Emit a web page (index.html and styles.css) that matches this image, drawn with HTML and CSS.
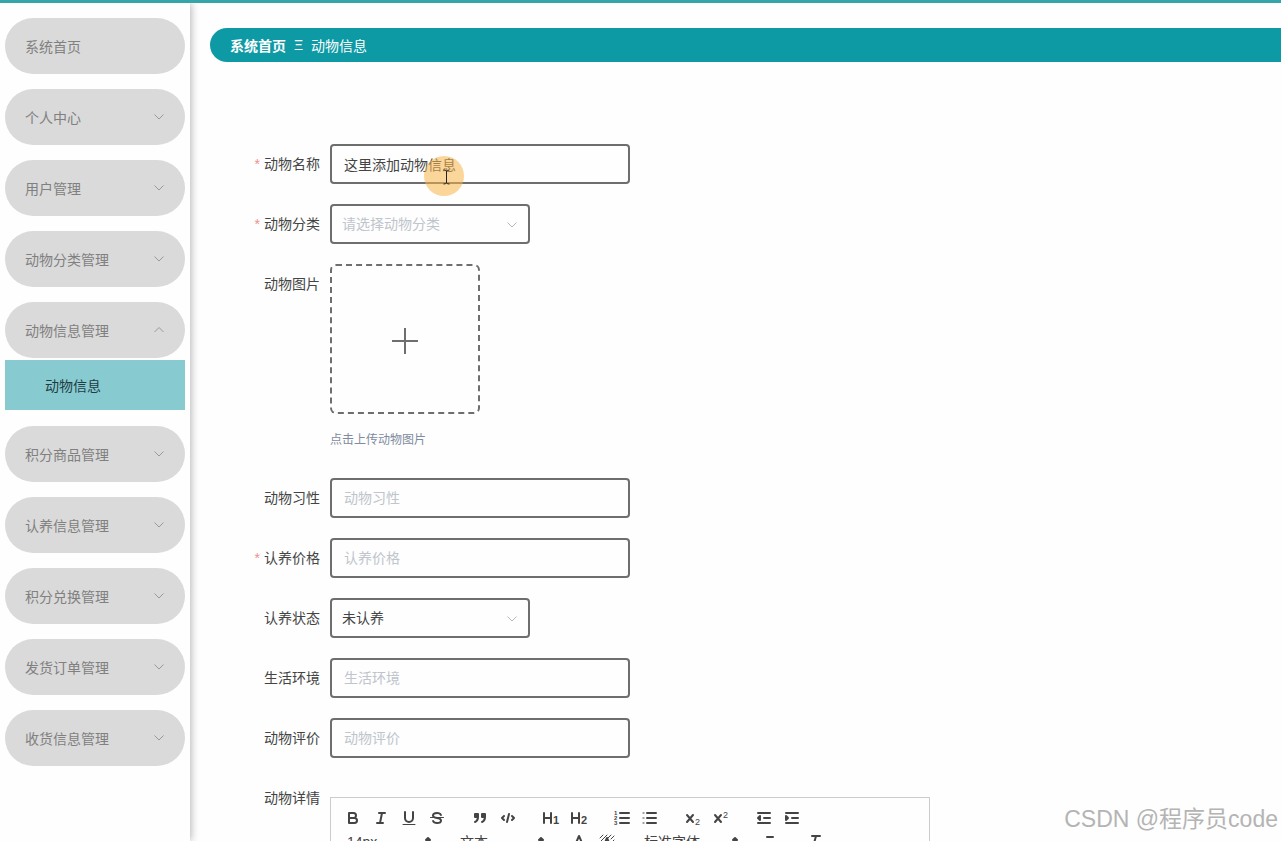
FILE: index.html
```html
<!DOCTYPE html>
<html lang="zh-CN">
<head>
    <meta charset="UTF-8">
    <meta name="viewport" content="width=device-width, initial-scale=1.0">
    <title>动物信息</title>
    <link rel="stylesheet" href="styles.css">
</head>
<body>
    <!-- 公用图标 -->
    <svg class="sprite" aria-hidden="true">
        <symbol id="down" viewBox="0 0 12 12"><path d="M1.5 3.5 6 8l4.500-4.500"/></symbol>
        <symbol id="up" viewBox="0 0 12 12"><path d="M1.500 8 6 3.500 10.500 8"/></symbol>
        <symbol id="picker" viewBox="0 0 18 18"><path class="fill" d="M7 11l2 2 2-2zM7 7l2-2 2 2z"/></symbol>
    </svg>

    <div class="layout">
        <aside class="sidebar">
            <nav class="menu">
                <button type="button" class="menu-item">系统首页</button>
                <button type="button" class="menu-item">个人中心<svg class="arrow"><use href="#down"/></svg></button>
                <button type="button" class="menu-item">用户管理<svg class="arrow"><use href="#down"/></svg></button>
                <button type="button" class="menu-item">动物分类管理<svg class="arrow"><use href="#down"/></svg></button>
                <div class="menu-group">
                    <button type="button" class="menu-item" aria-expanded="true">动物信息管理<svg class="arrow"><use href="#up"/></svg></button>
                    <a href="#" class="submenu-item">动物信息</a>
                </div>
                <button type="button" class="menu-item">积分商品管理<svg class="arrow"><use href="#down"/></svg></button>
                <button type="button" class="menu-item">认养信息管理<svg class="arrow"><use href="#down"/></svg></button>
                <button type="button" class="menu-item">积分兑换管理<svg class="arrow"><use href="#down"/></svg></button>
                <button type="button" class="menu-item">发货订单管理<svg class="arrow"><use href="#down"/></svg></button>
                <button type="button" class="menu-item">收货信息管理<svg class="arrow"><use href="#down"/></svg></button>
            </nav>
        </aside>

        <main class="main">
            <div class="breadcrumb">
                <a href="#">系统首页</a>
                <span class="separator">Ξ</span>
                <span>动物信息</span>
            </div>

            <form class="form">
                <div class="form-item">
                    <label for="name" class="required">动物名称</label>
                    <div class="pointer-box">
                        <input type="text" id="name" value="这里添加动物信息">
                        <span class="pointer">
                            <svg viewBox="0 0 40 40"><path d="M19.500 14q2 0 3 1 1-1 3-1M22.500 15v12M19.500 28q2 0 3-1 1 1 3 1"/></svg>
                        </span>
                    </div>
                </div>
                <div class="form-item">
                    <label for="type" class="required">动物分类</label>
                    <div class="select">
                        <select id="type" class="empty"><option>请选择动物分类</option></select>
                        <svg class="arrow"><use href="#down"/></svg>
                    </div>
                </div>
                <div class="form-item">
                    <label for="upload">动物图片</label>
                    <div>
                        <button type="button" id="upload" class="upload" aria-label="动物图片">
                            <svg viewBox="0 0 28 28"><path d="M14 1v26M1 14h26"/></svg>
                        </button>
                        <p class="tip">点击上传动物图片</p>
                    </div>
                </div>
                <div class="form-item">
                    <label for="habit">动物习性</label>
                    <input type="text" id="habit" placeholder="动物习性">
                </div>
                <div class="form-item">
                    <label for="price" class="required">认养价格</label>
                    <input type="text" id="price" placeholder="认养价格">
                </div>
                <div class="form-item">
                    <label for="state">认养状态</label>
                    <div class="select">
                        <select id="state"><option>未认养</option></select>
                        <svg class="arrow"><use href="#down"/></svg>
                    </div>
                </div>
                <div class="form-item">
                    <label for="env">生活环境</label>
                    <input type="text" id="env" placeholder="生活环境">
                </div>
                <div class="form-item">
                    <label for="comment">动物评价</label>
                    <input type="text" id="comment" placeholder="动物评价">
                </div>
                <div class="form-item">
                    <label for="detail">动物详情</label>
                    <div class="editor">
                        <div class="toolbar">
                            <div class="formats">
                                <button type="button" aria-label="加粗"><svg viewBox="0 0 18 18"><path d="M5 4h4.500a2.500 2.500 0 0 1 0 5H5zM5 9h5.500a2.500 2.500 0 0 1 0 5H5z"/></svg></button>
                                <button type="button" aria-label="斜体"><svg viewBox="0 0 18 18"><path d="M7 4h6M5 14h6M8 14l2-10"/></svg></button>
                                <button type="button" aria-label="下划线"><svg viewBox="0 0 18 18"><path d="M5 3v6a4 4 0 0 0 8 0V3"/><path class="thin" d="M3 15.500h12"/></svg></button>
                                <button type="button" aria-label="删除线"><svg viewBox="0 0 18 18"><path class="thin" d="M2.500 8.500h13"/><path d="M12.900 6C12.500 4.900 10.900 4 9 4 6.800 4 5 5.100 5 6.500 5 8 6.300 8.700 9 9s4 1 4 2.500S11.200 14 9 14c-1.900 0-3.500-.9-3.900-2"/></svg></button>
                            </div>
                            <div class="formats">
                                <button type="button" aria-label="引用"><svg viewBox="0 0 18 18"><path class="solid" d="M4 5h3v3H4zM11 5h3v3h-3zM7 8c0 4-3 5-3 5M14 8c0 4-3 5-3 5"/></svg></button>
                                <button type="button" aria-label="代码"><svg viewBox="0 0 18 18"><path d="M5 7 3 9l2 2M13 7l2 2-2 2M10 5 8 13"/></svg></button>
                            </div>
                            <div class="formats">
                                <button type="button" aria-label="标题一"><svg viewBox="0 0 18 18"><path d="M2 4v10M9 4v10M2 9h7"/><text class="bold" x="11" y="15" font-size="11">1</text></svg></button>
                                <button type="button" aria-label="标题二"><svg viewBox="0 0 18 18"><path d="M2 4v10M9 4v10M2 9h7"/><text class="bold" x="11" y="15" font-size="11">2</text></svg></button>
                            </div>
                            <div class="formats">
                                <button type="button" aria-label="有序列表"><svg viewBox="0 0 18 18"><path d="M7 4h9M7 9h9M7 14h9"/><text class="bold" x="1" y="6" font-size="6">1</text><text class="bold" x="1" y="11" font-size="6">2</text><text class="bold" x="1" y="16" font-size="6">3</text></svg></button>
                                <button type="button" aria-label="无序列表"><svg viewBox="0 0 18 18"><path d="M6 4h9M6 9h9M6 14h9"/><path class="dots" d="M2 4h1M2 9h1M2 14h1"/></svg></button>
                            </div>
                            <div class="formats">
                                <button type="button" aria-label="下标"><svg viewBox="0 0 18 18"><path d="M3 6l6 7M9 6l-6 7"/><text x="11" y="16" font-size="9">2</text></svg></button>
                                <button type="button" aria-label="上标"><svg viewBox="0 0 18 18"><path d="M3 6l6 7M9 6l-6 7"/><text x="11" y="9" font-size="9">2</text></svg></button>
                            </div>
                            <div class="formats">
                                <button type="button" aria-label="减少缩进"><svg viewBox="0 0 18 18"><path d="M3 14h12M3 4h12M9 9h6"/><path class="solid" d="M5 7v4L3 9z"/></svg></button>
                                <button type="button" aria-label="增加缩进"><svg viewBox="0 0 18 18"><path d="M3 14h12M3 4h12M9 9h6"/><path class="solid" d="M3 7v4l2-2z"/></svg></button>
                            </div>
                        </div>
                        <div class="toolbar">
                            <div class="picker">
                                <select aria-label="字号"><option>14px</option></select>
                                <svg><use href="#picker"/></svg>
                            </div>
                            <div class="picker">
                                <select aria-label="标题"><option>文本</option></select>
                                <svg><use href="#picker"/></svg>
                            </div>
                            <div class="formats">
                                <button type="button" aria-label="字体颜色"><svg viewBox="0 0 18 18"><path d="M3 15h12M5.500 11 9 3l3.500 8M11.600 9H6.400"/></svg></button>
                                <button type="button" aria-label="背景颜色"><svg viewBox="0 0 18 18"><path class="thin" d="M2 5l3-3M2 9l7-7M2 13l3-3M9 6l4-4M13 6l3-3M14 9l2-2M2 16l3-3M8 16l2-2M12 16l4-4"/><path d="M5.500 13 9 5l3.500 8M11.600 11H6.400"/></svg></button>
                            </div>
                            <div class="picker picker-font">
                                <select aria-label="字体"><option>标准字体</option></select>
                                <svg><use href="#picker"/></svg>
                            </div>
                            <div class="formats">
                                <button type="button" aria-label="对齐"><svg viewBox="0 0 18 18"><path d="M3 9h12M3 14h10M3 4h6"/></svg></button>
                            </div>
                            <div class="formats">
                                <button type="button" aria-label="清除格式"><svg viewBox="0 0 18 18"><path d="M5 3h8M6 14l3-11M11 11l4 4M15 11l-4 4"/></svg></button>
                            </div>
                        </div>
                        <textarea id="detail"></textarea>
                    </div>
                </div>
            </form>
        </main>
    </div>

    <div class="watermark">CSDN @程序员code</div>
</body>
</html>
```

FILE: styles.css
```css
* {
    box-sizing: border-box;
}
body {
    margin: 0;
    height: 100vh;
    overflow: hidden;
    background-color: #fdfefd;
    color: #444;
    font-family: "Liberation Sans", "Noto Sans CJK SC", sans-serif;
    font-size: 14px;
}
button, input, select, textarea {
    font: inherit;
    color: inherit;
}
a {
    color: inherit;
    text-decoration: none;
}
svg {
    fill: none;
    stroke: currentColor;
}
.sprite {
    display: none;
}
.layout {
    display: flex;
    height: 100%;
    border-top: 3px solid #35a5a8;
    overflow: hidden;
}

/* 左侧菜单 */
.sidebar {
    flex: none;
    width: 190px;
    padding: 15px 5px;
    box-shadow: 1px 0 8px rgba(0, 0, 0, 0.3);
}
.menu {
    display: flex;
    flex-direction: column;
    gap: 15px;
}
.menu-item {
    display: flex;
    align-items: center;
    justify-content: space-between;
    width: 100%;
    height: 56px;
    padding: 0 20px;
    border: none;
    border-radius: 28px;
    background-color: #dadada;
    color: #808080;
    cursor: pointer;
}
.arrow {
    width: 12px;
    height: 12px;
}
.menu-item .arrow {
    color: #999;
}
.menu-group {
    padding-bottom: 1px;
}
.submenu-item {
    display: flex;
    align-items: center;
    height: 50px;
    margin-top: 2px;
    padding: 0 40px;
    background-color: #87cbd0;
    color: #223b45;
}

/* 右侧内容 */
.main {
    flex: 1;
    min-width: 0;
    padding: 25px 0 0 20px;
    overflow: hidden;
}
.breadcrumb {
    display: flex;
    align-items: center;
    gap: 8px;
    height: 34px;
    padding: 0 20px;
    border-radius: 17px 0 0 17px;
    background-color: #0e9aa5;
    color: #fff;
}
.breadcrumb a {
    font-weight: bold;
}
.form {
    display: flex;
    flex-direction: column;
    gap: 20px;
    padding: 82px 20px 20px 0;
}
.form-item {
    display: flex;
    align-items: flex-start;
}
.form-item > label {
    flex: none;
    width: 120px;
    padding-right: 10px;
    line-height: 40px;
    text-align: right;
}
.required::before {
    content: "*";
    margin-right: 4px;
    color: #ee9090;
}
.form input, .select select {
    display: block;
    width: 300px;
    height: 40px;
    padding: 0 12px;
    border: 2px solid #6e6e6e;
    border-radius: 4px;
    background-color: transparent;
    outline: none;
}
.form input::placeholder {
    color: #c0c4cc;
}
.select {
    position: relative;
}
.select select {
    width: 200px;
    padding: 0 10px;
    appearance: none;
}
.select .empty {
    color: #c0c4cc;
}
.select .arrow {
    position: absolute;
    top: 15px;
    right: 12px;
    color: #b4b8c0;
    pointer-events: none;
}
.upload {
    display: flex;
    align-items: center;
    justify-content: center;
    width: 150px;
    height: 150px;
    padding-top: 4px;
    border: 2px dashed #6e6e6e;
    border-radius: 6px;
    background: none;
    color: #6e6e6e;
    cursor: pointer;
}
.upload svg {
    width: 28px;
    height: 28px;
    stroke-width: 2;
}
.tip {
    margin: 16px 0 8px;
    color: #7f8ba0;
    font-size: 12px;
    line-height: 20px;
}

/* 鼠标光标高亮 */
.pointer-box {
    position: relative;
}
.pointer {
    position: absolute;
    top: 12px;
    left: 94px;
    width: 40px;
    height: 40px;
    border-radius: 50%;
    background-color: rgba(247, 181, 74, 0.55);
    pointer-events: none;
}
.pointer svg {
    display: block;
    color: #222;
}

/* 富文本编辑器 */
.editor {
    width: 600px;
    margin-top: 19px;
    padding: 8px 0;
    border: 1px solid #ccc;
}
.toolbar {
    display: flex;
    gap: 15px;
    height: 24px;
    padding: 0 8px;
}
.formats {
    display: flex;
}
.formats button {
    width: 28px;
    height: 24px;
    padding: 3px 5px;
    border: none;
    background: none;
    cursor: pointer;
}
.toolbar svg {
    display: block;
    width: 18px;
    height: 18px;
    stroke-width: 2;
    stroke-linecap: round;
    stroke-linejoin: round;
}
.toolbar .thin {
    stroke-width: 1;
}
.toolbar .dots {
    stroke-linecap: square;
    stroke-width: 1;
}
.toolbar .solid, .fill {
    fill: currentColor;
}
.fill {
    stroke-width: 2;
}
.toolbar text {
    fill: currentColor;
    stroke: none;
}
.toolbar .bold {
    font-weight: bold;
}
.picker {
    position: relative;
    width: 98px;
}
.picker-font {
    width: 108px;
}
.picker select {
    width: 100%;
    height: 24px;
    padding: 0 8px;
    border: none;
    background: none;
    appearance: none;
}
.picker svg {
    position: absolute;
    top: 3px;
    right: 0;
    pointer-events: none;
}
.editor textarea {
    display: block;
    width: 100%;
    height: 200px;
    border: none;
    background: none;
    resize: none;
}

.watermark {
    position: absolute;
    right: 3px;
    bottom: 4px;
    color: #b4b4b4;
    font-size: 23px;
    line-height: 36px;
}
```
